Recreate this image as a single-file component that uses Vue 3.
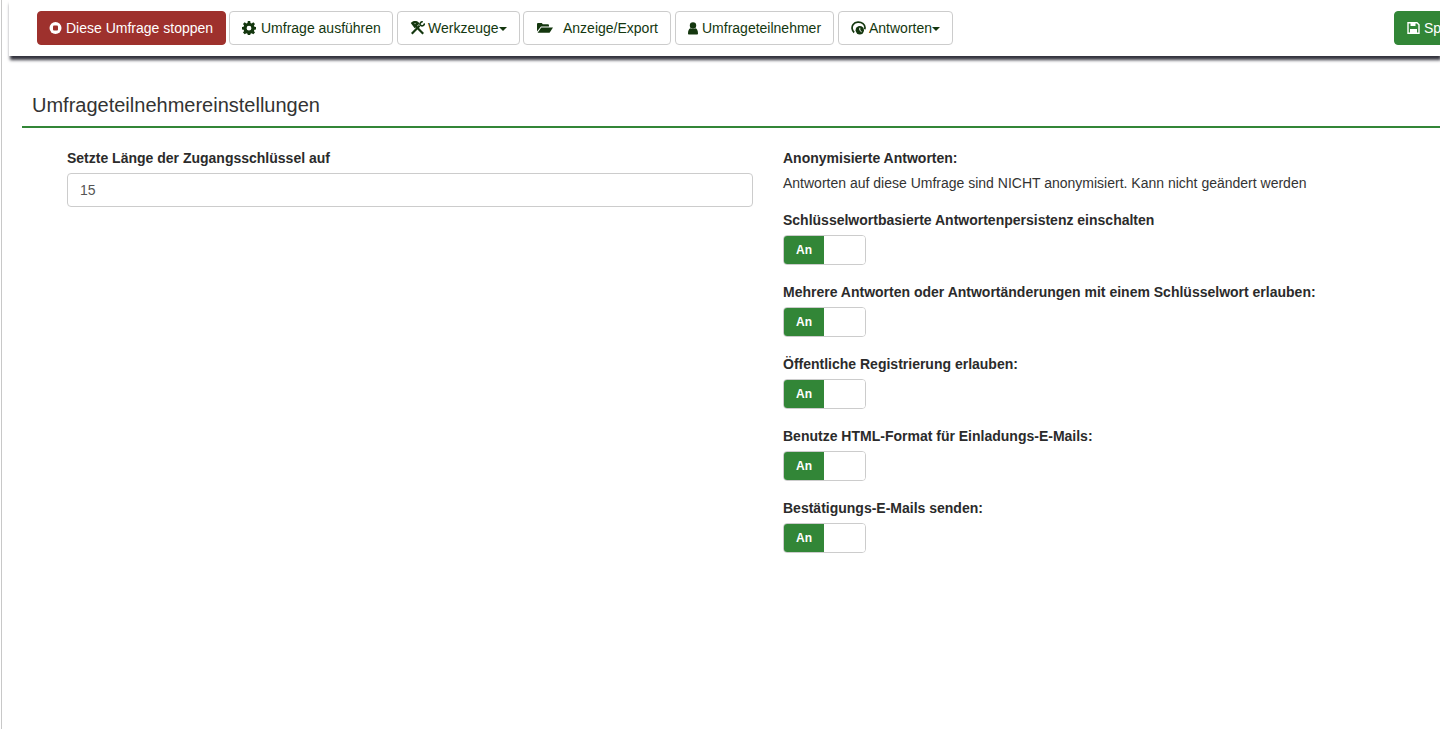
<script setup>
const toggles = [
  'Schlüsselwortbasierte Antwortenpersistenz einschalten',
  'Mehrere Antworten oder Antwortänderungen mit einem Schlüsselwort erlauben:',
  'Öffentliche Registrierung erlauben:',
  'Benutze HTML-Format für Einladungs-E-Mails:',
  'Bestätigungs-E-Mails senden:'
]
</script>

<template>
  <div class="page">
    <header class="bar">
      <div class="left">
        <button class="btn stop">
          <svg class="ico" width="13" height="14" viewBox="0 0 12 14"><circle cx="6" cy="7" r="6" fill="#fff"/><rect x="3.500" y="4.500" width="5" height="5" rx="1" fill="#9e312d"/></svg>
          Diese Umfrage stoppen
        </button>
        <button class="btn b2">
          <svg class="ico" width="14" height="14" viewBox="0 0 14 14"><path fill="#14370f" fill-rule="evenodd" d="M5.800 0h2.400l.3 1.900 1.200.5L11.300 1.300 13 3l-1.100 1.600.5 1.200 1.600.3v2.400l-1.600.3-.5 1.200L13 11.600 11.300 13.300l-1.600-1.100-1.200.5-.3 1.300H5.800l-.3-1.300-1.200-.5L2.700 13.300 1 11.600l1.100-1.600-.5-1.200L0 8.500V6.100l1.600-.3.5-1.200L1 3 2.700 1.300l1.600 1.100 1.200-.5zM7 4.800a2.400 2.400 0 1 0 0 4.800 2.400 2.400 0 0 0 0-4.800z"/></svg>
          Umfrage ausführen
        </button>
        <button class="btn b3">
          <svg class="ico tight" width="15" height="14" viewBox="0 0 15 14"><g fill="none" stroke="#14370f"><path stroke-width="2.200" d="M1.800 12.800 9.500 4.800"/><path stroke-width="2.200" d="M13.200 12.800 5.800 5.200"/><path stroke-width="2.600" d="M2.500 2.200C4 .8 6.300.8 7.800 2.400L4.800 5.200z"/><path stroke-width="1.600" d="M12.800 .8C10.800.6 9.800 2.200 10 4L12 5C13.500 4.800 14.500 3.800 14.300 2.300"/></g></svg>
          Werkzeuge<span class="caret"></span>
        </button>
        <button class="btn b4">
          <svg class="ico" width="16" height="14" viewBox="0 0 16 14"><path fill="#14370f" d="M0 3.200C0 2.500.5 2 1.200 2h3.600l1 1.200h5c.6 0 1.200.5 1.200 1.200V5.500H4L0 10.500z"/><path fill="#14370f" d="M4.300 6.500H16l-3.400 5.300H.6z"/></svg>
          <span>Anzeige/Export</span>
        </button>
        <button class="btn b5">
          <svg class="ico" width="10" height="14" viewBox="0 0 10 14"><circle cx="5" cy="4.500" r="3.200" fill="#14370f"/><path fill="#14370f" d="M0 12.500C0 9.500 1 7.500 2.500 7.200 3.500 8 6.500 8 7.500 7.200 9 7.500 10 9.500 10 12.500c0 .8-.5 1-1 1H1c-.5 0-1-.2-1-1z"/></svg>
          Umfrageteilnehmer
        </button>
        <button class="btn b6">
          <svg class="ico tight" width="15" height="14" viewBox="0 0 15 14"><path fill="none" stroke="#14370f" stroke-width="1.700" d="M3.200 11.500C.8 9.500.4 5.800 2.200 3.400 4.300.6 9.300.4 12 2.600c1.800 1.500 2.300 3.700 1.700 5.600"/><circle cx="8.800" cy="9.300" r="4.200" fill="#14370f"/><path fill="none" stroke="#fff" stroke-width="1" d="M8.800 6.800v2.500l1.800 1.500"/></svg>
          Antworten<span class="caret"></span>
        </button>
      </div>
      <button class="btn save">
        <svg class="ico" width="13" height="14" viewBox="0 0 13 14"><path fill="none" stroke="#fff" stroke-width="1.400" d="M1 1.700h9l2 2V12.300H1z"/><path fill="#fff" d="M3.500 1.500h5v3.500h-5zM3 8h7v4H3z"/></svg>
        Speichern
      </button>
    </header>

    <main class="content">
      <h3 class="title">Umfrageteilnehmereinstellungen</h3>
      <div class="columns">
        <section class="col-left">
          <label class="lab">Setzte Länge der Zugangsschlüssel auf</label>
          <input class="field" value="15" />
        </section>
        <section class="col-right">
          <div class="group first">
            <label class="lab">Anonymisierte Antworten:</label>
            <p class="note">Antworten auf diese Umfrage sind NICHT anonymisiert. Kann nicht geändert werden</p>
          </div>
          <div v-for="t in toggles" :key="t" class="group">
            <label class="lab">{{ t }}</label>
            <div class="switch"><span class="on">An</span><span class="off"></span></div>
          </div>
        </section>
      </div>
    </main>
  </div>
</template>

<style>
html, body { margin: 0; background: #fff; overflow: hidden; }
</style>

<style scoped>
.page {
  width: 1440px;
  height: 729px;
  overflow: hidden;
  box-sizing: border-box;
  border-left: 1px solid #c8c8c8;
  margin-left: 1px;
  font-family: "Liberation Sans", Arial, sans-serif;
  font-size: 14px;
  color: #333;
}
.bar {
  display: flex;
  justify-content: space-between;
  box-sizing: border-box;
  width: 1431px;
  margin-left: 7px;
  height: 56px;
  padding: 11px 0 0 28px;
  box-shadow: 1px 4px 3px #34343e;
  background: #fff;
}
.left { display: flex; gap: 3px; }
.btn {
  display: inline-flex;
  align-items: center;
  box-sizing: border-box;
  height: 34px;
  padding: 0 12px;
  border: 1px solid #ccc;
  border-radius: 4px;
  background: #fff;
  color: #14370f;
  font: 14px "Liberation Sans", Arial, sans-serif;
  white-space: nowrap;
}
.ico { margin-right: 4px; flex: none; }
.ico.tight { margin-right: 3px; }
.stop { background: #9e312d; border-color: #9e312d; color: #fff; width: 189px; padding-left: 11px; }
.b2 { width: 164px; margin-right: 1px; }
.b2 .ico { margin-right: 5px; }
.b3 { width: 123px; }
.b4 { width: 148px; margin-right: 1px; padding-left: 13px; }
.b4 span { margin-left: 6px; }
.b5 { width: 159px; margin-right: 1px; }
.b6 { width: 115px; }
.caret {
  display: inline-block;
  width: 0;
  height: 0;
  margin-top: 2px;
  border-top: 4px solid #14370f;
  border-left: 4px solid transparent;
  border-right: 4px solid transparent;
}
.save {
  background: #328637;
  border-color: #328637;
  color: #fff;
  width: 110px;
  flex: none;
  margin-right: -64px;
}
.content { padding: 0 0 0 20px; }
.title {
  margin: 0;
  height: 72px;
  box-sizing: border-box;
  padding: 38px 0 0 10px;
  font-size: 20px;
  font-weight: 400;
  line-height: 22px;
  color: #333;
  border-bottom: 2px solid #328637;
  width: 1440px;
}
.columns { display: flex; padding: 22px 0 0 45px; }
.col-left { width: 686px; margin-right: 30px; flex: none; }
.lab {
  display: block;
  font-size: 14px;
  font-weight: 700;
  line-height: 16px;
  color: #2b2b2b;
}
.field {
  display: block;
  box-sizing: border-box;
  width: 686px;
  height: 34px;
  margin-top: 7px;
  padding: 0 12px;
  border: 1px solid #ccc;
  border-radius: 4px;
  font: 14px "Liberation Sans", Arial, sans-serif;
  color: #555;
  outline: none;
}
.note { margin: 8px 0 0; font-size: 14px; line-height: 18px; color: #333; }
.group { margin-bottom: 19px; }
.group.first { margin-bottom: 20px; }
.switch {
  display: flex;
  box-sizing: border-box;
  width: 83px;
  height: 30px;
  margin-top: 7px;
  border: 1px solid #ccc;
  border-radius: 4px;
  overflow: hidden;
}
.on {
  width: 40px;
  background: #328637;
  color: #fff;
  font-size: 12px;
  font-weight: 700;
  line-height: 28px;
  text-align: center;
}
.off { flex: 1; background: #fff; }
</style>
